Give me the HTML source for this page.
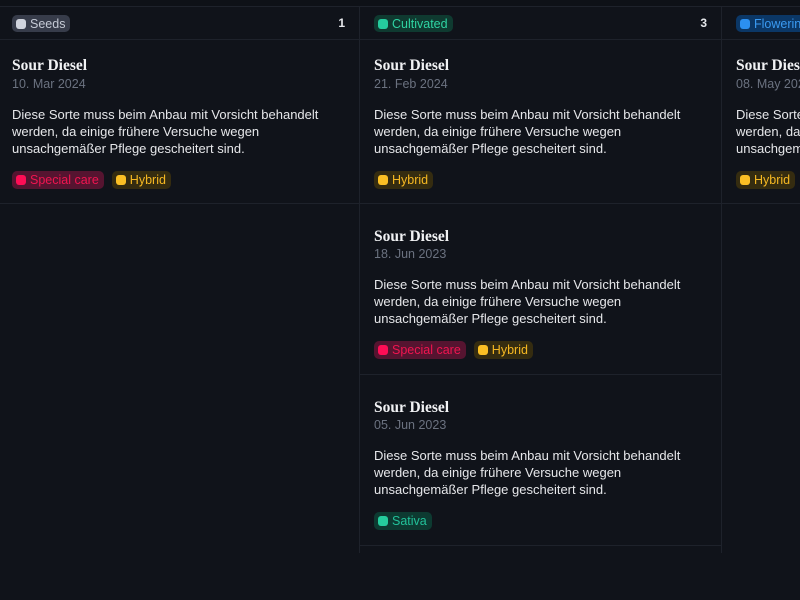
<!DOCTYPE html>
<html><head><meta charset="utf-8"><style>
*{box-sizing:border-box;margin:0;padding:0}
body{width:800px;height:600px;overflow:hidden;background:#10131a;font-family:"Liberation Sans",sans-serif;position:relative}
.topline{position:absolute;left:0;top:0;width:800px;height:7px;background:#0e1117;border-bottom:1px solid #1e222b}
.col{position:absolute;top:7px;width:361px;}
.hdr{height:33px;border-bottom:1px solid #1e222b;position:relative}
.cnt{position:absolute;right:14px;top:9px;color:#e5e7eb;font-size:12px;font-weight:bold}
.badge{position:absolute;top:8px;display:inline-flex;align-items:center;height:17px;padding:0 5px 0 4px;border-radius:5px;font-size:12.5px;white-space:nowrap}
.badge i,.tag i{display:inline-block;width:10px;height:10px;border-radius:3px;margin-right:4px}
.card{border-bottom:1px solid #1e222b;height:171px;position:relative}
.card.first{height:164px}
.ti{position:absolute;font-family:"Liberation Serif",serif;font-weight:bold;font-size:15.5px;color:#f1f2f4;white-space:nowrap}
.dt{position:absolute;font-size:12.5px;color:#6b7280;white-space:nowrap}
.ds{position:absolute;font-size:13px;line-height:17px;color:#e6e7ea;width:322px}
.tags{position:absolute;display:flex;gap:8px}
.tag{display:inline-flex;align-items:center;height:18px;padding:0 5px 0 4px;border-radius:5px;font-size:12.5px}
.sc{background:#561430;color:#f01550}.sc i{background:#ff0d55}
.hy{background:#352c10;color:#f6b822}.hy i{background:#fbbf24}
.sa{background:#0d3a31;color:#22c19a}.sa i{background:#25cc9d}
</style></head><body>
<div class="topline"></div>

<div class="col" style="left:0;width:360px;border-right:1px solid #1e222b;height:546px">
 <div class="hdr"><span class="badge" style="left:12px;background:#373c4a;color:#c5cad5"><i style="background:#d0d4dd"></i>Seeds</span><span class="cnt">1</span></div>
 <div class="card first">
  <div class="ti" style="left:12px;top:17px">Sour Diesel</div>
  <div class="dt" style="left:12px;top:37px">10. Mar 2024</div>
  <div class="ds" style="left:12px;top:66px">Diese Sorte muss beim Anbau mit Vorsicht behandelt werden, da einige frühere Versuche wegen unsachgemäßer Pflege gescheitert sind.</div>
  <div class="tags" style="left:12px;top:131px"><span class="tag sc"><i></i>Special care</span><span class="tag hy"><i></i>Hybrid</span></div>
 </div>
</div>

<div class="col" style="left:360px;width:362px;border-right:1px solid #1e222b;height:546px">
 <div class="hdr"><span class="badge" style="left:14px;background:#0f3a30;color:#2fd3a2"><i style="background:#25cc9d"></i>Cultivated</span><span class="cnt">3</span></div>
 <div class="card first">
  <div class="ti" style="left:14px;top:17px">Sour Diesel</div>
  <div class="dt" style="left:14px;top:37px">21. Feb 2024</div>
  <div class="ds" style="left:14px;top:66px">Diese Sorte muss beim Anbau mit Vorsicht behandelt werden, da einige frühere Versuche wegen unsachgemäßer Pflege gescheitert sind.</div>
  <div class="tags" style="left:14px;top:131px"><span class="tag hy"><i></i>Hybrid</span></div>
 </div>
 <div class="card">
  <div class="ti" style="left:14px;top:24px">Sour Diesel</div>
  <div class="dt" style="left:14px;top:43px">18. Jun 2023</div>
  <div class="ds" style="left:14px;top:72px">Diese Sorte muss beim Anbau mit Vorsicht behandelt werden, da einige frühere Versuche wegen unsachgemäßer Pflege gescheitert sind.</div>
  <div class="tags" style="left:14px;top:137px"><span class="tag sc"><i></i>Special care</span><span class="tag hy"><i></i>Hybrid</span></div>
 </div>
 <div class="card">
  <div class="ti" style="left:14px;top:24px">Sour Diesel</div>
  <div class="dt" style="left:14px;top:43px">05. Jun 2023</div>
  <div class="ds" style="left:14px;top:72px">Diese Sorte muss beim Anbau mit Vorsicht behandelt werden, da einige frühere Versuche wegen unsachgemäßer Pflege gescheitert sind.</div>
  <div class="tags" style="left:14px;top:137px"><span class="tag sa"><i></i>Sativa</span></div>
 </div>
</div>

<div class="col" style="left:722px;width:78px;height:200px;overflow:hidden">
 <div class="hdr"><span class="badge" style="left:14px;background:#0b3766;color:#3a9af2;border-radius:5px 0 0 5px"><i style="background:#2b8ff0"></i>Flowering</span></div>
 <div class="card first">
  <div class="ti" style="left:14px;top:17px">Sour Diesel</div>
  <div class="dt" style="left:14px;top:37px">08. May 2024</div>
  <div class="ds" style="left:14px;top:66px">Diese Sorte muss beim Anbau mit Vorsicht behandelt werden, da einige frühere Versuche wegen unsachgemäßer Pflege gescheitert sind.</div>
  <div class="tags" style="left:14px;top:131px"><span class="tag hy"><i></i>Hybrid</span></div>
 </div>
</div>
</body></html>
